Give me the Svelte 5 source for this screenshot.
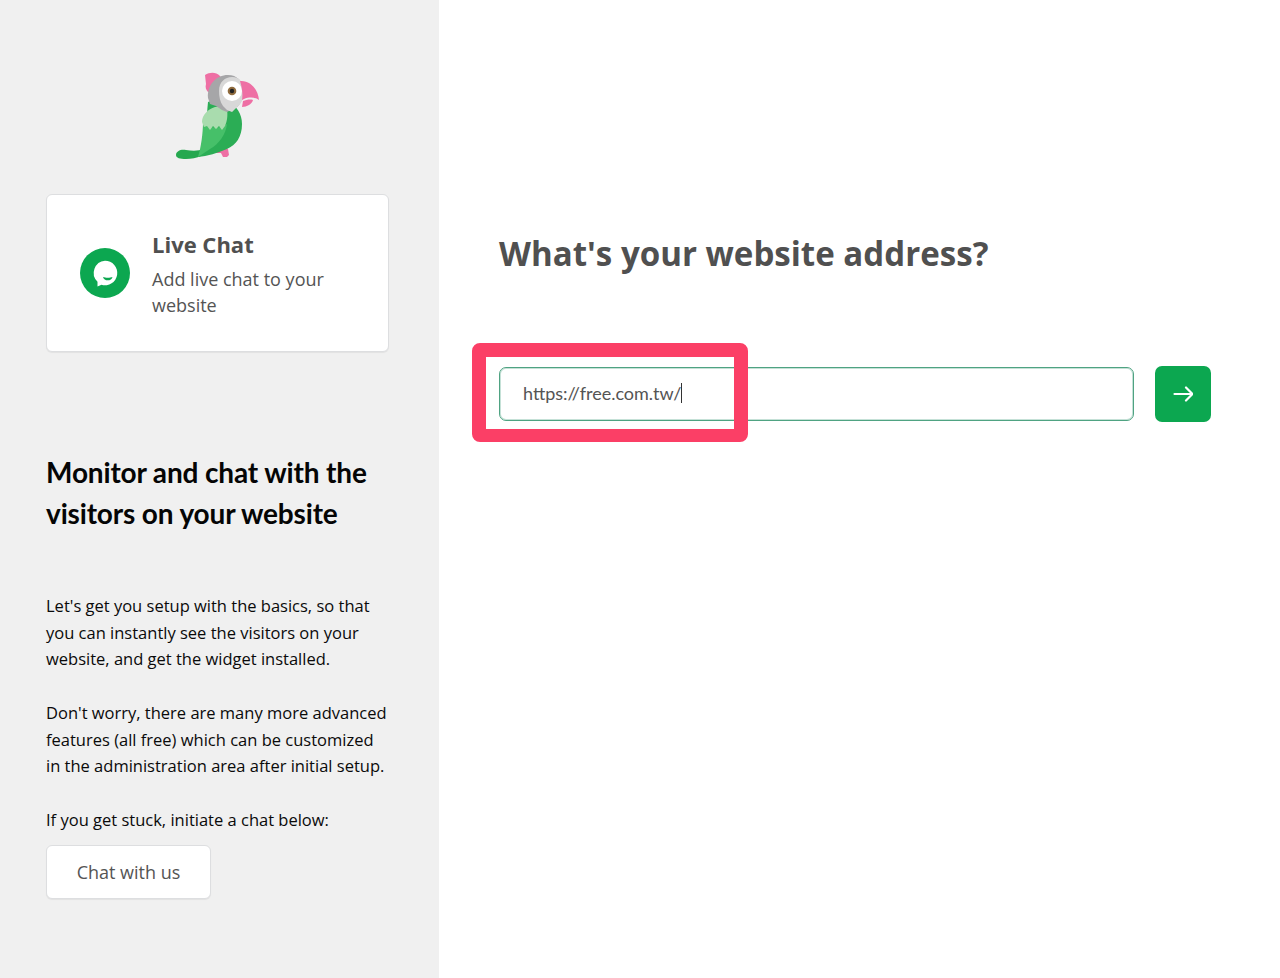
<script>
  const paragraphs = [
    ["Let's get you setup with the basics, so that", "you can instantly see the visitors on your", "website, and get the widget installed."],
    ["Don't worry, there are many more advanced", "features (all free) which can be customized", "in the administration area after initial setup."],
    ["If you get stuck, initiate a chat below:"]
  ];
</script>

<div class="page">
  <aside class="side">
    <div class="logo">
      <svg width="110" height="110" viewBox="0 0 110 110" aria-label="tawk.to parrot">
        <path d="M16 95c0-4 5-6 10-5 7 1 12 1 18-1l-3 7c-4 2-10 3-15 3-6 0-10-1-10-4z" fill="#25a84f"/>
        <path d="M50 91l11-3 7 1 1 6-2 2-4 0-2-4-8 0-5 0z" fill="#ee6fa4"/>
        <path d="M48 42c6-3 14-3 20 0 9 4 14 12 14 22 0 13-6 21-15 25-9 4-20 7-29 8 4-9 7-18 8-28 1-9 1-19 2-27z" fill="#2bad55"/>
        <path d="M43 62c6 6 14 8 24 2-1 10-8 20-17 25l-12 8c3-9 5-24 5-35z" fill="#46c069"/>
        <path d="M55 47c5-1 9 0 12 3 1 5 0 12-2 16l-3 4-3-4-3 3-3-3-3 4-3-4-3 1-2-5c0-7 6-13 13-15z" fill="#a9dcae"/>
        <path d="M46 24l-1-9c5-3 11-3 15 1l2 3c-5 2-9 6-12 13l-2 0c-2-2-3-5-2-8z" fill="#ee6fa4"/>
        <path d="M48 38c-1-13 8-23 20-23 9 0 15 6 15 16 0 8-3 14-6 16l-10 5-5-2-6-4-6-2-2-6z" fill="#a6a6a8"/>
        <path d="M59 31c0-9 6-14 13-14 8 0 12 6 12 14 0 8-3 13-7 16l-5 5-5-2-4-4c-3-4-4-10-4-15z" fill="#d8d8d8"/>
        <circle cx="72" cy="31" r="10" fill="#fff"/>
        <circle cx="72" cy="31" r="4.300" fill="#8f6b3e"/>
        <circle cx="72" cy="31" r="2.200" fill="#222"/>
        <path d="M80 21c10-1 18 8 19 19-4-3-10-3-15-1l-2 1c1-6 0-13-2-19z" fill="#ee6fa4"/>
        <path d="M83 41c3-1 7-2 10-1-1 4-6 7-11 7z" fill="#ee6fa4"/>
      </svg>
    </div>

    <div class="card">
      <svg class="chat-icon" width="50" height="50" viewBox="0 0 50 50" aria-hidden="true">
        <circle cx="25" cy="25" r="25" fill="#0ca750"/>
        <path d="M25 12.700a12.300 12.300 0 1 1-3.500 24.100L17.500 38.500V33.800A12.300 12.300 0 0 1 25 12.700z" fill="#fff"/>
        <path d="M23 29c2.500 1 7 1 9.500 0-.5 2.500-2.500 3.300-4.700 3.300S23.500 31.500 23 29z" fill="#0ca750"/>
      </svg>
      <div class="card-text">
        <h3>Live Chat</h3>
        <p>Add live chat to your website</p>
      </div>
    </div>

    <h2>Monitor and chat with the<br />visitors on your website</h2>

    <div class="copy">
      {#each paragraphs as lines}
        <p>
          {#each lines as line}
            <span>{line}</span>
          {/each}
        </p>
      {/each}
    </div>

    <button class="chat-btn" type="button">Chat with us</button>
  </aside>

  <main class="content">
    <h1>What's your website address?</h1>
    <div class="form-row">
      <div class="field">
        <span class="value">https://free.com.tw/</span><span class="caret"></span>
      </div>
      <button class="go" type="button" aria-label="Next">
        <svg width="20" height="16" viewBox="0 0 20 16" fill="none" stroke="#fff" stroke-width="2.200" stroke-linecap="round" stroke-linejoin="round">
          <path d="M1.500 8H19M13 1.500 19.500 8 13 14.500" />
        </svg>
      </button>
      <div class="highlight"></div>
    </div>
  </main>
</div>

<style>
  :global(body) {
    margin: 0;
    background: #fff;
  }

  .page {
    display: flex;
    height: 978px;
    overflow: hidden;
    font-family: "Open Sans", sans-serif;
  }

  .side {
    box-sizing: border-box;
    width: 439px;
    flex: none;
    background: #f0f0f0;
    padding: 60px 50px 0 46px;
  }

  .logo {
    display: flex;
    height: 110px;
    padding-left: 114px;
  }

  .card {
    box-sizing: border-box;
    display: flex;
    align-items: center;
    gap: 22px;
    height: 158px;
    margin-top: 24px;
    padding: 0 20px 0 33px;
    background: #fff;
    border: 1px solid #dddee0;
    border-radius: 6px;
    box-shadow: 0 1px 1px rgba(0, 0, 0, 0.06);
  }

  .chat-icon {
    flex: none;
  }

  .card-text h3 {
    margin: 0;
    font-size: 22px;
    line-height: 30px;
    font-weight: 700;
    color: #505050;
  }

  .card-text p {
    margin: 7px 0 0;
    font-size: 18px;
    line-height: 26px;
    color: #545454;
  }

  h2 {
    margin: 100px 0 0;
    font-family: Lato, sans-serif;
    font-size: 28px;
    line-height: 41px;
    font-weight: 700;
    color: #050505;
    letter-spacing: -0.15px;
  }

  .copy {
    margin-top: 59px;
    font-size: 16.5px;
    line-height: 26.670px;
    color: #0a0a0a;
  }

  .copy p {
    margin: 0 0 27px;
  }

  .copy p:last-child {
    margin-bottom: 0;
  }

  .copy span {
    display: block;
    white-space: nowrap;
  }

  .chat-btn {
    display: block;
    box-sizing: border-box;
    width: 165px;
    height: 54px;
    margin-top: 11px;
    background: #fff;
    border: 1px solid #dddee0;
    border-radius: 6px;
    box-shadow: 0 1px 1px rgba(0, 0, 0, 0.06);
    font: 18px "Open Sans", sans-serif;
    color: #545454;
  }

  .content {
    flex: 1;
    padding: 0 69px 0 60px;
  }

  h1 {
    margin: 231px 0 0;
    font-size: 33.1px;
    line-height: 45px;
    font-weight: 700;
    color: #505050;
    white-space: nowrap;
  }

  .form-row {
    position: relative;
    display: flex;
    align-items: center;
    gap: 21px;
    margin-top: 90px;
  }

  .field {
    box-sizing: border-box;
    display: flex;
    align-items: center;
    flex: 1;
    height: 54px;
    padding: 0 0 2px 23px;
    border: 1px solid #4fa382;
    border-radius: 7px;
    box-shadow: inset 0 0 0 1px rgba(90, 170, 140, 0.35);
    font-family: Lato, sans-serif;
    font-size: 18px;
    color: #545454;
  }

  .caret {
    width: 1px;
    height: 20px;
    background: #333;
  }

  .go {
    display: flex;
    align-items: center;
    justify-content: center;
    box-sizing: border-box;
    width: 56px;
    height: 56px;
    flex: none;
    padding: 0;
    border: 0;
    border-radius: 7px;
    background: #0ca750;
  }

  .highlight {
    position: absolute;
    box-sizing: border-box;
    left: -27px;
    top: -23px;
    width: 276px;
    height: 99px;
    border: 14px solid #fb3f66;
    border-bottom-width: 13px;
    border-radius: 8px;
  }
</style>
